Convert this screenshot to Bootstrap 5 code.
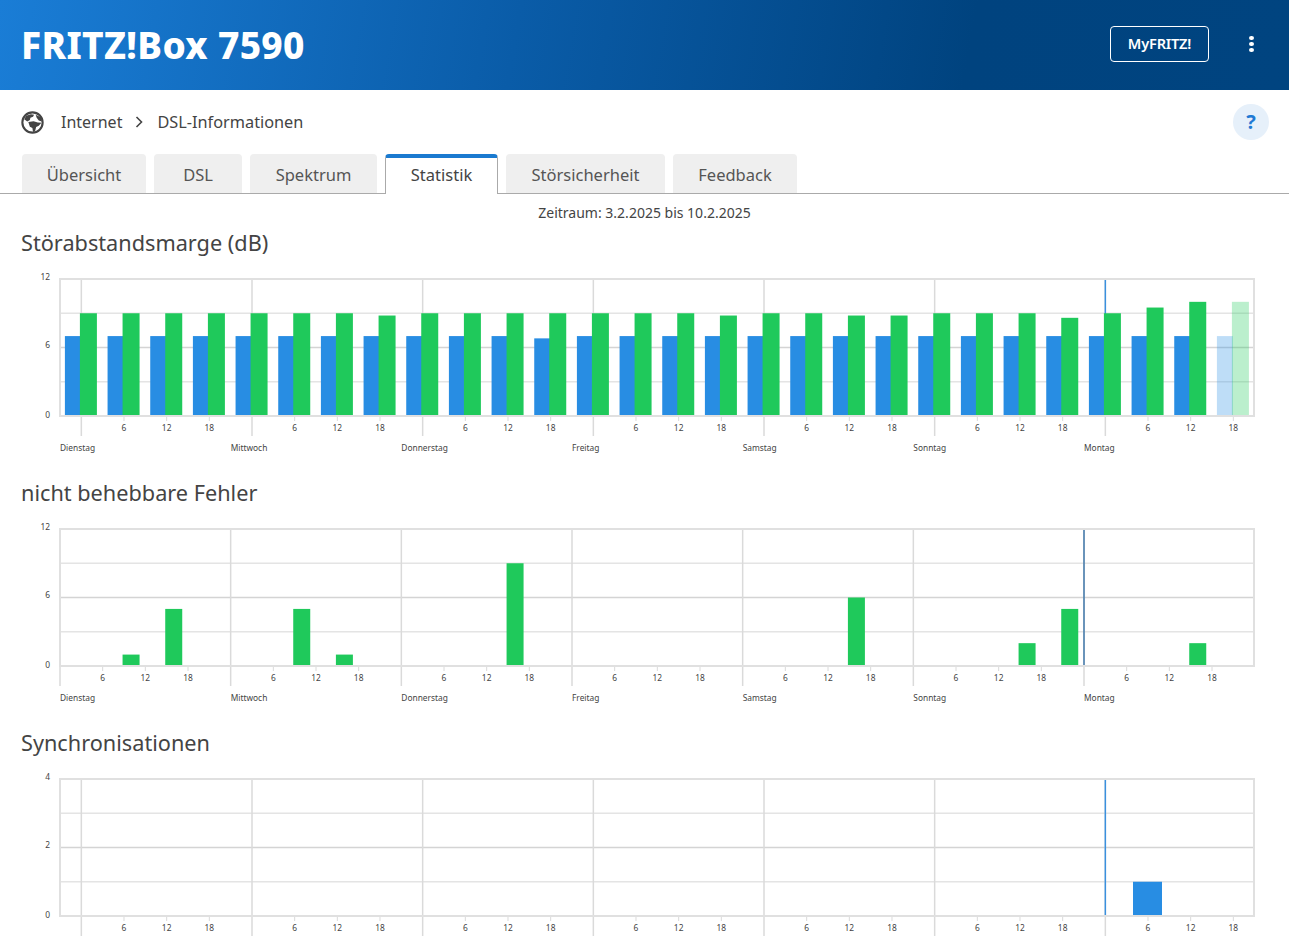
<!DOCTYPE html>
<html lang="de">
<head>
<meta charset="utf-8">
<title>FRITZ!Box 7590</title>
<link href="https://cdn.jsdelivr.net/npm/bootstrap@5.3.0/dist/css/bootstrap.min.css" rel="stylesheet">
<style>
html,body{margin:0;background:#fff;overflow:hidden}
body{font-family:"Noto Sans","Liberation Sans",sans-serif;color:#444}
.fb-page{height:940px;overflow:hidden}
.fb-head{height:90px;padding:0 36px 2px 21px;background:linear-gradient(100deg,#1a7dd6 0%,#0a5ca8 40%,#00437f 75%,#004480 100%)}
.fb-title{font-family:"Noto Sans",sans-serif;font-weight:800;font-size:37px;letter-spacing:.35px;color:#fff;margin:0;line-height:1}
.fb-my{width:99px;height:36px;padding:0;font-size:14.6px;font-weight:600;letter-spacing:-.2px;border-radius:4px;border-color:#fff;color:#fff}
.fb-dots{width:4px;gap:1.5px;margin-left:40px}
.fb-dots i{display:block;flex:none;width:5px;height:4.5px;border-radius:50%;background:#fff}
.fb-crumb{height:64px;padding:0 20px 0 21px;font-size:16px}
.fb-crumb svg{display:block;flex:none}
.fb-first{margin-left:17px}
.fb-chev{margin:0 14px 0 13px}
.fb-last{font-size:16.3px}
.fb-help{width:36px;height:36px;border-radius:50%;background:#e6f0fa;color:#1f7ad4;font-weight:700;font-size:20px;line-height:36px;text-align:center}
.fb-tabs{height:40px;padding-left:22px;gap:8px;border-bottom:1px solid #aaa;flex-wrap:nowrap}
.fb-tabs .nav-link{height:39px;margin:0;padding:3px 0 0;display:flex;align-items:center;justify-content:center;background:#efefef;color:#555;border:0;border-radius:4px 4px 0 0;font-size:16.5px}
.fb-tabs .nav-link.active{height:40px;padding:0 0 2px;background:#fff;color:#444;border:1px solid #aaa;border-top:4px solid #1a7ad0;border-bottom:0}
.fb-range{height:34px;font-size:14px;line-height:38px;color:#444}
.fb-h{height:30px;margin:0;padding-left:21px;font-size:21.7px;font-weight:400;line-height:30px;color:#444}
.fb-chart{display:block;width:1289px;height:220px}
.fb-chart text{font-family:"Noto Sans",sans-serif;font-size:8.4px;fill:#444}
</style>
</head>
<body>
<div class="fb-page">
  <header class="fb-head d-flex align-items-center justify-content-between">
    <h1 class="fb-title">FRITZ!Box 7590</h1>
    <div class="d-flex align-items-center">
      <button type="button" class="btn btn-outline-light fb-my">MyFRITZ!</button>
      <div class="fb-dots d-flex flex-column align-items-center" aria-label="Menü"><i></i><i></i><i></i></div>
    </div>
  </header>
  <div class="fb-crumb d-flex align-items-center">
    <svg width="23" height="23" viewBox="0 0 22 22" aria-hidden="true">
      <circle cx="11" cy="11" r="9.7" fill="#fff" stroke="#444" stroke-width="2"/>
      <path d="M5 4.5 9.5 3l3 .5-1 2-2.5 1-.5 2-2.5 1.5L3 8z" fill="#444"/>
      <path d="M14 3.5 19 6l1 4-3-1-2-2.5z" fill="#444"/>
      <path d="M7 10.5l5-.8 4 1.3 3.5.2-2.5 3-2.5 1-1 4-2 1-.6-4-2.4-1.2z" fill="#444"/>
    </svg>
    <span class="fb-first text-nowrap">Internet</span>
    <svg class="fb-chev" width="8" height="12" viewBox="0 0 8 12" aria-hidden="true"><path d="M1.5 1 6.5 6l-5 5" fill="none" stroke="#444" stroke-width="1.6"/></svg>
    <span class="fb-last text-nowrap">DSL-Informationen</span>
    <div class="fb-help ms-auto">?</div>
  </div>
  <ul class="nav nav-tabs fb-tabs">
    <li class="nav-item"><a class="nav-link" href="#" data-w="124">Übersicht</a></li>
    <li class="nav-item"><a class="nav-link" href="#" data-w="88">DSL</a></li>
    <li class="nav-item"><a class="nav-link" href="#" data-w="127">Spektrum</a></li>
    <li class="nav-item"><a class="nav-link active" href="#" data-w="113">Statistik</a></li>
    <li class="nav-item"><a class="nav-link" href="#" data-w="159">Störsicherheit</a></li>
    <li class="nav-item"><a class="nav-link" href="#" data-w="124">Feedback</a></li>
  </ul>
  <div class="fb-range text-center">Zeitraum: 3.2.2025 bis 10.2.2025</div>
  <h2 class="fb-h">Störabstandsmarge (dB)</h2>
  <svg class="fb-chart" id="c1"></svg>
  <h2 class="fb-h">nicht behebbare Fehler</h2>
  <svg class="fb-chart" id="c2"></svg>
  <h2 class="fb-h">Synchronisationen</h2>
  <svg class="fb-chart" id="c3"></svg>
</div>
<script src="https://cdn.jsdelivr.net/npm/bootstrap@5.3.0/dist/js/bootstrap.bundle.min.js"></script>
<script>
document.querySelectorAll('.fb-tabs .nav-link').forEach(function(a){a.style.width=a.dataset.w+'px';});
var NS='http://www.w3.org/2000/svg',L=60,R=1254,T=21,B=158,DAYS=['Dienstag','Mittwoch','Donnerstag','Freitag','Samstag','Sonntag','Montag'],STEP=42.667;
function el(p,n,a,t){var e=document.createElementNS(NS,n);for(var k in a)e.setAttribute(k,a[k]);if(t!==undefined)e.textContent=t;p.appendChild(e);return e;}
function line(p,x1,y1,x2,y2,c,w){el(p,'line',{x1:x1,y1:y1,x2:x2,y2:y2,stroke:c,'stroke-width':w});}
function bar(p,x,w,v,max,c,op){var h=v/max*(B-T);el(p,'rect',{x:x,y:B-h,width:w,height:h,fill:c,opacity:op||1});}
function chart(id,o){
  var s=document.getElementById(id),g=(B-T)/4;
  s.setAttribute('viewBox','0 0 1289 220');
  line(s,L,T+g,R,T+g,'#e4e4e4',1.5);line(s,L,T+2*g,R,T+2*g,'#d4d4d4',1.5);line(s,L,T+3*g,R,T+3*g,'#e4e4e4',1.5);
  DAYS.forEach(function(d,i){
    var x=o.base+i*170.667;
    line(s,x,T,x,B+20,'#dadada',1.5);
    if(i==6)line(s,x,T,x,B,o.now,o.nowW);
    for(var k=1;k<=3;k++){
      var tx=x+k*STEP;
      line(s,tx,B,tx,B+5,'#dadada',1);
      el(s,'text',{x:tx,y:B+15,'text-anchor':'middle'},k*6);
    }
    if(o.days)el(s,'text',{x:60+i*170.667,y:B+35},d);
  });
  o.labels.forEach(function(t,i){el(s,'text',{x:50,y:[T+1,T+69,B+2][i],'text-anchor':'end'},t);});
  o.draw(s);
  el(s,'rect',{x:L,y:T,width:R-L,height:B-T,fill:'none',stroke:'#e0e0e0','stroke-width':2});
}
var G='#1fc95b',Bl='#288de3';
function c(i){return 80.9+STEP*i;}
var green1=[9,9,9,9,9,9,9,8.8,9,9,9,9,9,9,9,8.8,9,9,8.8,8.8,9,9,9,8.6,9,9.5,10,10];
chart('c1',{base:81.33,now:'#3a90de',nowW:1.5,days:true,labels:[12,6,0],draw:function(s){
  green1.forEach(function(v,i){
    var op=i==27?.3:1;
    bar(s,c(i)-16,16,i==11?6.8:7,12,Bl,op);
    bar(s,c(i)-1,17,v,12,G,op);
  });
}});
chart('c2',{base:60,now:'#1a5f9e',nowW:1.2,days:true,labels:[12,6,0],draw:function(s){
  [[1,1],[2,5],[5,5],[6,1],[10,9],[18,6],[22,2],[23,5],[26,2]].forEach(function(b){bar(s,c(b[0])-1,17,b[1],12,G);});
}});
chart('c3',{base:81.33,now:'#3a90de',nowW:1.5,days:false,labels:[4,2,0],draw:function(s){
  bar(s,1133,29,1,4,Bl);
}});
</script>
</body>
</html>
